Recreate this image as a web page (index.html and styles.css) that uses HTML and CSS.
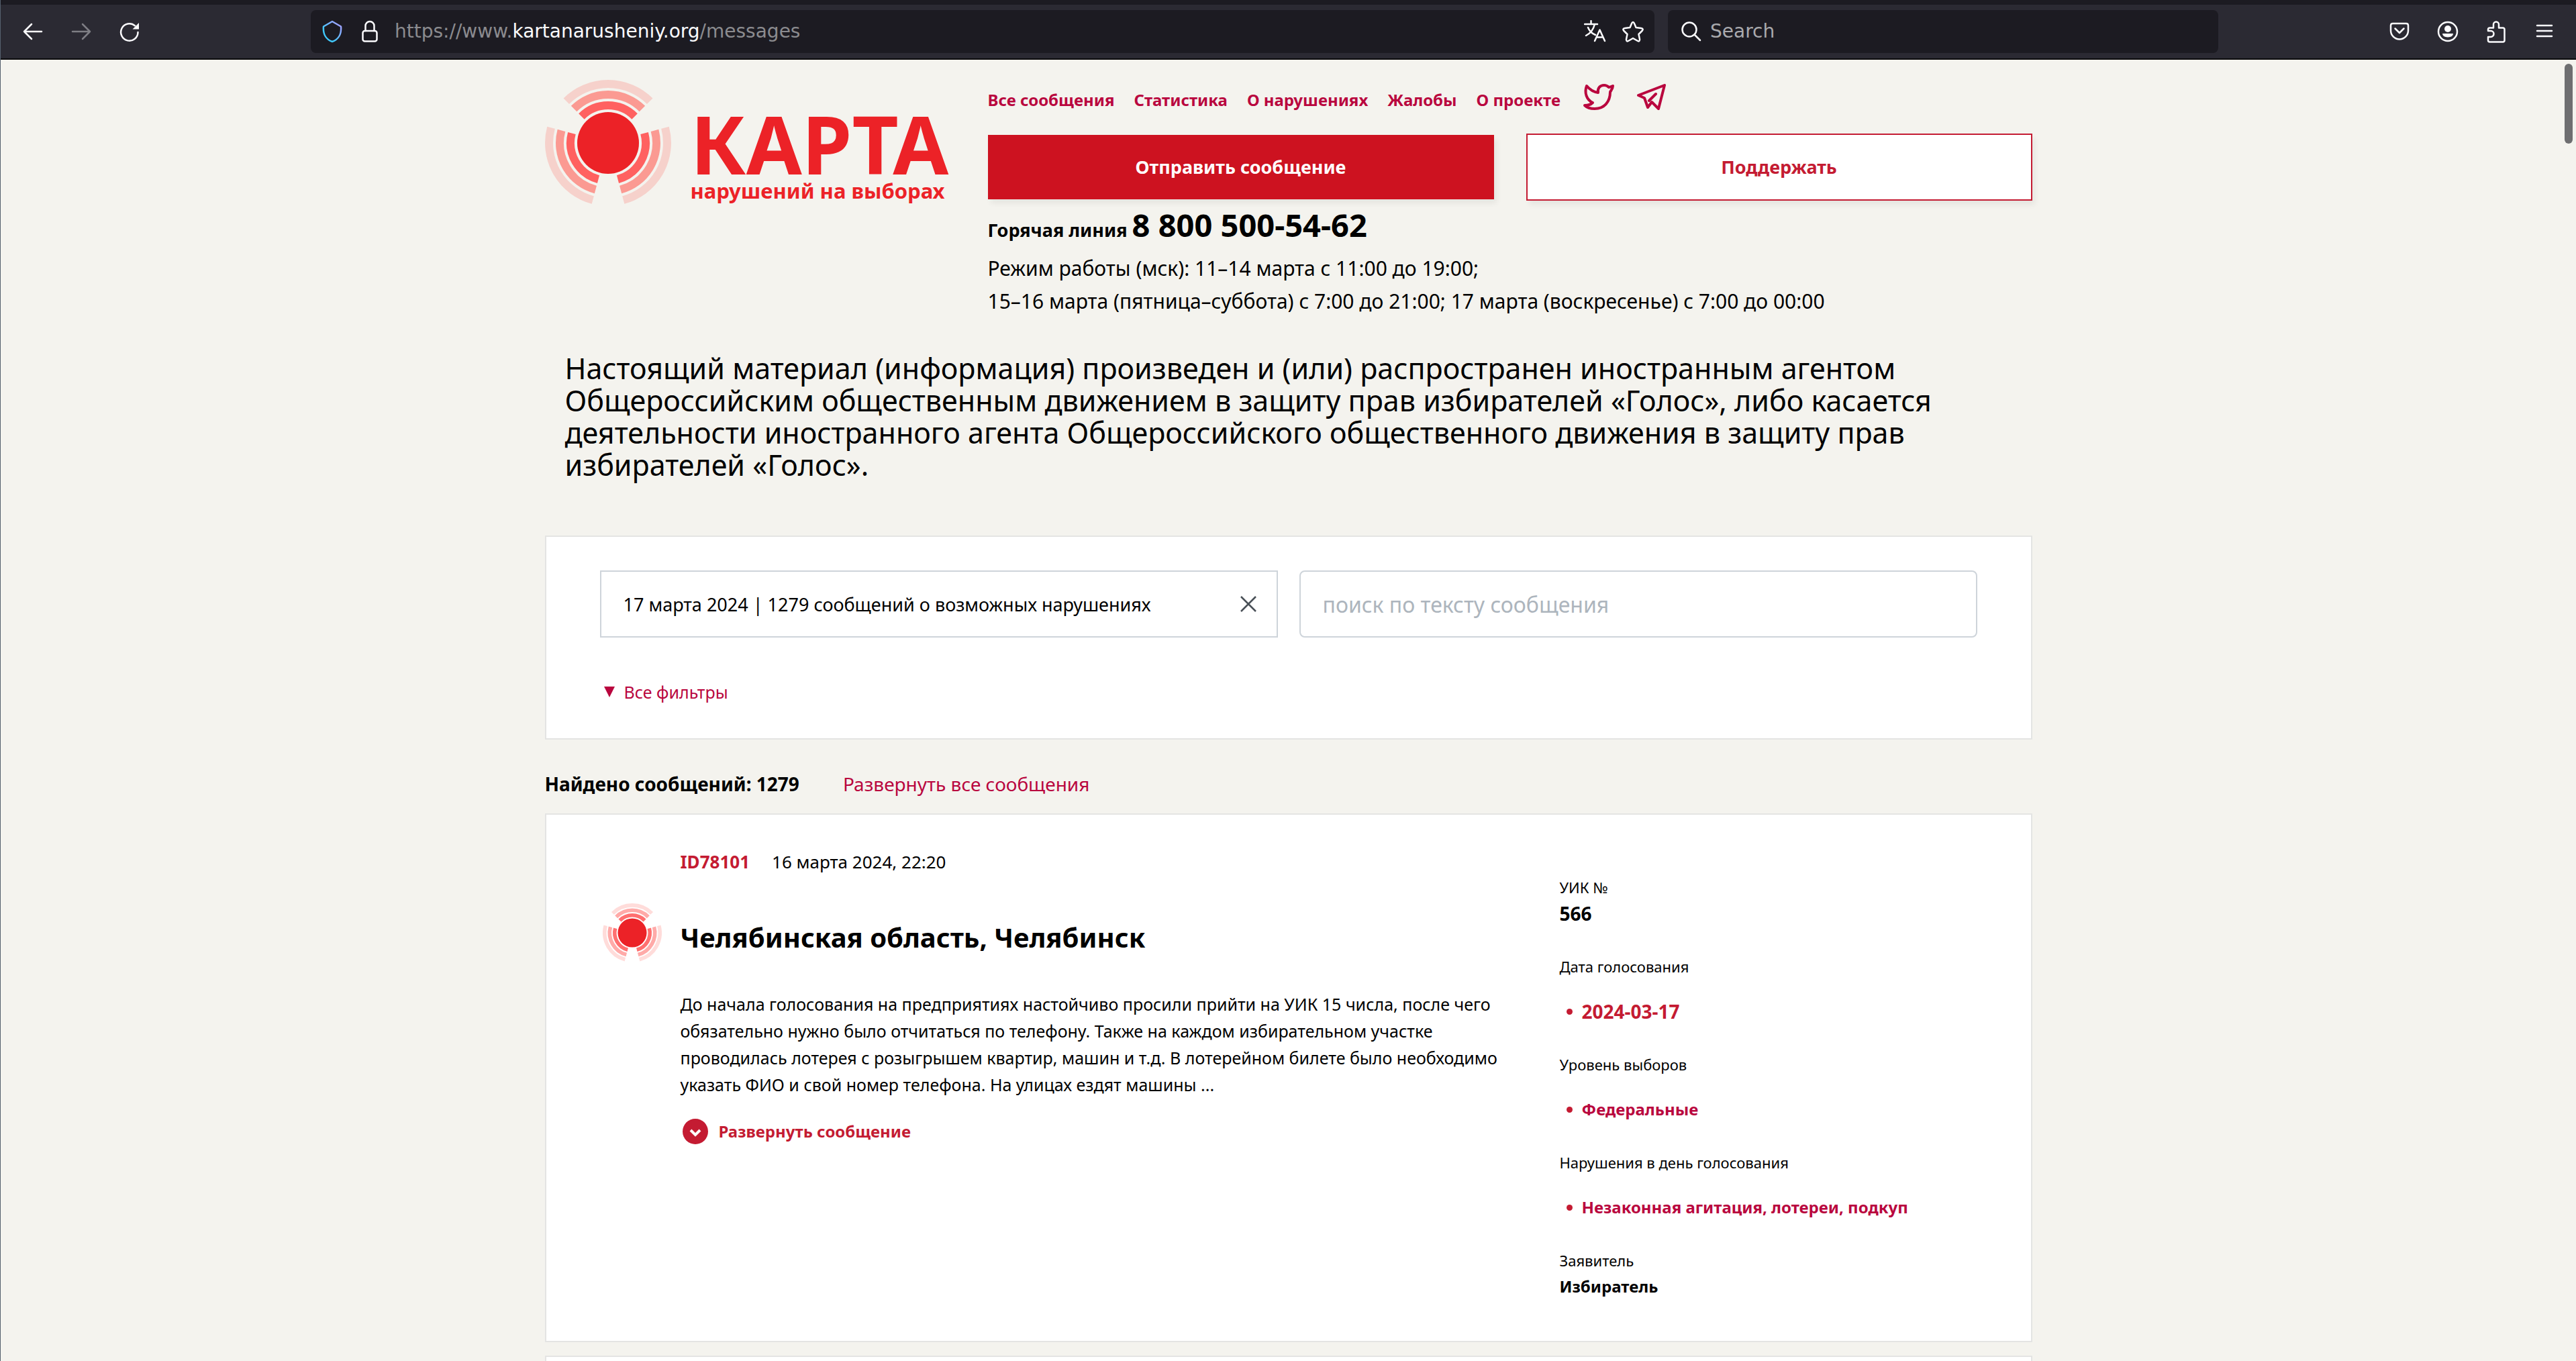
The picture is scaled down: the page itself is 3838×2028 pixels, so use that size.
FILE: index.html
```html
<!DOCTYPE html>
<html lang="ru">
<head>
<meta charset="utf-8">
<title>Карта нарушений на выборах</title>
<link rel="stylesheet" href="styles.css">
</head>
<body>
<svg class="sprite" aria-hidden="true">
  <symbol id="emblem" viewBox="-94 -94 188 188">
    <circle class="emblem-core" r="46"/>
    <g id="rings">
      <path class="ring ring-1" d="M-39.6-39.6A56 56 0 0 1 39.6-39.6"/>
      <path class="ring ring-2" d="M-50.9-50.9A72 72 0 0 1 50.9-50.9"/>
      <path class="ring ring-3" d="M-62.2-62.2A88 88 0 0 1 62.2-62.2"/>
    </g>
    <use href="#rings" transform="rotate(120)"/>
    <use href="#rings" transform="rotate(240)"/>
  </symbol>
</svg>
<div class="window">
  <div class="tab-strip"></div>
  <div class="toolbar">
    <div class="tool-group">
      <button class="tool" aria-label="Back"><svg width="32" height="32" viewBox="0 0 32 32"><path d="M29 16H3M14 5L3 16L14 27"/></svg></button>
      <button class="tool tool-dim" aria-label="Forward"><svg width="32" height="32" viewBox="0 0 32 32"><path d="M3 16H29M18 5L29 16L18 27"/></svg></button>
      <button class="tool" aria-label="Reload"><svg width="32" height="32" viewBox="0 0 32 32"><path d="M28.500 17A12.700 12.700 0 1 1 24 7.300"/><path class="solid" d="M30 3V12.500H20.500Z"/></svg></button>
    </div>
    <div class="fields">
      <div class="url-bar">
        <svg width="32" height="34" viewBox="0 0 32 34"><defs><linearGradient id="shield" x1="0" y1="1" x2="1" y2="0"><stop offset=".3" stop-color="#3fc8fb"/><stop offset=".85" stop-color="#9ba4ff"/></linearGradient></defs><path class="shield" d="M16 2L29 9.500C30 21 25 29 16 32C7 29 2 21 3 9.500Z"/></svg>
        <svg class="lock" width="24" height="34" viewBox="0 0 24 34"><rect x="1.500" y="16" width="21" height="15.500" rx="3"/><path d="M5.500 16V8.500A6.500 6.500 0 0 1 18.500 8.500V16"/></svg>
        <div class="url">https://www.<span class="url-host">kartanarusheniy.org</span>/messages</div>
        <button class="bar-icon" aria-label="Translate"><svg width="34" height="34" viewBox="0 0 34 34"><path d="M1 6H20M10.500 1V6M16 6C14 14 9 20 3 23M6 11C8 16 12 20 17 22"/><path d="M16 31L23.500 14.500L31 31M19 25.500H28"/></svg></button>
        <button class="bar-icon" aria-label="Bookmark"><svg width="34" height="34" viewBox="0 0 34 34"><path d="M17 3C18 3 18.500 3.700 19 5L21.500 11L29 12C32 12.500 32.500 14 30.500 16L25.500 21L27 28.500C27.300 31 26 32 24 31L17 27L10 31C8 32 6.700 31 7 28.500L8.500 21L3.500 16C1.500 14 2 12.500 5 12L12.500 11L15 5C15.500 3.700 16 3 17 3Z"/></svg></button>
      </div>
      <label class="search-bar">
        <svg width="30" height="30" viewBox="0 0 30 30"><circle cx="12" cy="12" r="10.500"/><path d="M20 20L28 28"/></svg>
        <input class="search-input" type="search" placeholder="Search" aria-label="Search">
      </label>
    </div>
    <div class="tool-group">
      <button class="tool" aria-label="Pocket"><svg width="32" height="32" viewBox="0 0 32 32"><path d="M6 4H26Q29 4 29 7V14.500A13 13 0 0 1 3 14.500V7Q3 4 6 4ZM9.500 11.500L16 18L22.500 11.500"/></svg></button>
      <button class="tool" aria-label="Account"><svg width="32" height="32" viewBox="0 0 32 32"><circle cx="16" cy="16" r="14"/><circle class="solid" cx="16" cy="12" r="5"/><path class="solid" d="M8 19H24Q24 24 16 24.500Q8 24 8 19Z"/></svg></button>
      <button class="tool" aria-label="Extensions"><svg width="32" height="34" viewBox="0 0 32 34"><path d="M4 16V14Q4 11.500 6.500 11.500H12V6.500A4 4 0 0 1 20 6.500V11.500H26Q28.500 11.500 28.500 14V30Q28.500 32.500 26 32.500H6.500Q4 32.500 4 30V25H8A4.500 4.500 0 0 0 8 16H4Z"/></svg></button>
      <button class="tool" aria-label="Menu"><svg width="32" height="32" viewBox="0 0 32 32"><path d="M5 7H27M5 15H27M5 23H27"/></svg></button>
    </div>
  </div>

  <div class="viewport">
    <div class="scroll-thumb"></div>
    <div class="page">
      <header class="header">
        <a class="logo" href="#">
          <svg class="emblem" width="188" height="188"><use href="#emblem"/></svg>
          <span class="logo-text"><span class="logo-name">КАРТА</span><span class="logo-sub">нарушений на выборах</span></span>
        </a>
        <div class="header-main">
          <nav class="nav">
            <a href="#">Все сообщения</a>
            <a href="#">Статистика</a>
            <a href="#">О нарушениях</a>
            <a href="#">Жалобы</a>
            <a href="#">О проекте</a>
            <a class="social" href="#" aria-label="Twitter"><svg width="48" height="40" viewBox="0 0 48 40"><path d="M6 3C11 9 16 12 23 13C22 6 26 2 32 2C35 2 37 3 39 5C41 5 43 4 45 3C45 7 43 9 41 12C41 27 32 37 18 37C12 37 7 36 3 32C8 32 12 31 15 28C6 24 2 13 6 3Z"/></svg></a>
            <a class="social" href="#" aria-label="Telegram"><svg width="44" height="40" viewBox="0 0 44 40"><path d="M41 2L2 17L11 21L16 35L22 27L32 37ZM28 15L18 25"/></svg></a>
          </nav>
          <div class="actions">
            <button class="btn btn-primary">Отправить сообщение</button>
            <button class="btn btn-outline">Поддержать</button>
          </div>
          <p class="hotline">Горячая линия <span class="phone">8 800 500-54-62</span></p>
          <p class="hours">Режим работы (мск): 11–14 марта с 11:00 до 19:00;<br>15–16 марта (пятница–суббота) с 7:00 до 21:00; 17 марта (воскресенье) с 7:00 до 00:00</p>
        </div>
      </header>

      <p class="disclaimer">Настоящий материал (информация) произведен и (или) распространен иностранным агентом Общероссийским общественным движением в защиту прав избирателей «Голос», либо касается деятельности иностранного агента Общероссийского общественного движения в защиту прав избирателей «Голос».</p>

      <form class="card filters">
        <div class="filter-row">
          <div class="field field-square">
            <input class="field-input" type="text" value="17 марта 2024 | 1279 сообщений о возможных нарушениях" aria-label="Кампания">
            <button class="clear" type="button" aria-label="Очистить"><svg width="26" height="26" viewBox="0 0 26 26"><path d="M2 2L24 24M24 2L2 24"/></svg></button>
          </div>
          <div class="field">
            <input class="field-input field-large" type="text" placeholder="поиск по тексту сообщения" aria-label="Поиск по тексту сообщения">
          </div>
        </div>
        <button class="all-filters" type="button"><svg width="16" height="16" viewBox="0 0 16 16"><path d="M0 0H16L8 16Z"/></svg>Все фильтры</button>
      </form>

      <div class="summary">
        <strong>Найдено сообщений: 1279</strong>
        <a href="#">Развернуть все сообщения</a>
      </div>

      <article class="card message">
        <div class="message-main">
          <div class="message-meta"><a class="message-id" href="#">ID78101</a><time>16 марта 2024, 22:20</time></div>
          <svg class="emblem emblem-light" width="88" height="88"><use href="#emblem"/></svg>
          <h2 class="message-title">Челябинская область, Челябинск</h2>
          <p class="message-text">До начала голосования на предприятиях настойчиво просили прийти на УИК 15 числа, после чего обязательно нужно было отчитаться по телефону. Также на каждом избирательном участке проводилась лотерея с розыгрышем квартир, машин и т.д. В лотерейном билете было необходимо указать ФИО и свой номер телефона. На улицах ездят машины ...</p>
          <button class="expand"><svg width="38" height="38" viewBox="0 0 38 38"><circle cx="19" cy="19" r="19"/><path d="M12 17L19 24L26 17"/></svg>Развернуть сообщение</button>
        </div>
        <dl class="facts">
          <div><dt>УИК №</dt><dd class="numeric">566</dd></div>
          <div><dt>Дата голосования</dt><dd class="numeric"><ul><li>2024-03-17</li></ul></dd></div>
          <div><dt>Уровень выборов</dt><dd><ul><li><a href="#">Федеральные</a></li></ul></dd></div>
          <div><dt>Нарушения в день голосования</dt><dd><ul><li><a href="#">Незаконная агитация, лотереи, подкуп</a></li></ul></dd></div>
          <div><dt>Заявитель</dt><dd>Избиратель</dd></div>
        </dl>
      </article>
      <article class="card message"></article>
    </div>
  </div>
</div>
</body>
</html>
```
FILE: styles.css
```css
:root {
  --link: #b9063e;
  --red: #c41b32;
  --small: 22px;
  --strong: 24px;
  --text: 25px;
  --medium: 27px;
  --lead: 28px;
  --large: 43px;
}

* { box-sizing: border-box; }

body {
  margin: 0;
  font-family: "Noto Sans", "Open Sans", sans-serif;
  font-size: var(--text);
  line-height: 40px;
  color: #000;
}

p, h2, dl, dd, ul { margin: 0; padding: 0; }
a { color: var(--link); text-decoration: none; }
svg { display: block; flex: none; }
button, input { font: inherit; color: inherit; margin: 0; padding: 0; border: 0; background: none; }
button { cursor: pointer; }
.sprite { position: absolute; width: 0; height: 0; }

.window {
  display: flex;
  flex-direction: column;
  height: 100vh;
  overflow: hidden;
  border-left: 1px solid #55606e;
  background: #f4f3ee;
}

/* Browser chrome */
.tab-strip { flex: none; height: 7px; background: #1c1b22; }
.toolbar {
  flex: none;
  display: flex;
  align-items: center;
  gap: 234px;
  height: 82px;
  padding: 0 11px 0 12px;
  background: #2b2a33;
  border-bottom: 2px solid #0c0c0d;
  font-family: "DejaVu Sans", sans-serif;
  font-size: 28px;
}
.toolbar svg { fill: none; stroke: #fbfbfe; stroke-width: 2.5; stroke-linecap: round; stroke-linejoin: round; }
.toolbar svg .solid { fill: #fbfbfe; stroke-width: 0; }
.toolbar svg .shield { stroke: url(#shield); }
.tool-group { display: flex; }
.tool { display: flex; align-items: center; justify-content: center; width: 72px; height: 64px; }
.tool-dim { opacity: .4; }
.fields { flex: 1; display: grid; grid-template-columns: 2002fr 820fr; gap: 20px; }
.url-bar, .search-bar {
  display: flex;
  align-items: center;
  height: 64px;
  border-radius: 8px;
  background: #1c1b22;
}
.url-bar { padding: 0 15px 0 16px; }
.search-bar { padding: 0 20px; gap: 13px; }
.lock { margin-left: 28px; }
.url { flex: 1; margin-left: 25px; color: #8b8b8f; }
.url-host { color: #fbfbfe; }
.bar-icon { margin-left: 22px; }
.search-input { flex: 1; min-width: 0; outline: 0; }
.search-input::placeholder { color: #a9a9ad; opacity: 1; }

/* Page */
.viewport { flex: 1; min-height: 0; position: relative; overflow: hidden; }
.scroll-thumb {
  position: absolute;
  top: 6px;
  right: 5px;
  width: 12px;
  height: 119px;
  border-radius: 6px;
  background: #6e6e70;
}
.page { max-width: 2216px; margin: 0 auto; }

.header { display: grid; grid-template-columns: 660px 1fr; }
.logo { display: flex; gap: 29px; padding-top: 30px; color: #ec2227; font-weight: 700; }
.logo-text { display: flex; flex-direction: column; }
.logo-name { padding-top: 45px; font-size: 120px; line-height: 100px; }
.logo-sub { font-size: 31px; line-height: 40px; }
.emblem { --ring-1: #ff6160; --ring-2: #fb9a92; --ring-3: #f6d1cb; }
.emblem-light { --ring-1: #ff7070; --ring-2: #ffaaa8; --ring-3: #ffdcda; }
.emblem-core { fill: #ec2227; }
.ring { fill: none; stroke-width: 12; }
.ring-1 { stroke: var(--ring-1); }
.ring-2 { stroke: var(--ring-2); }
.ring-3 { stroke: var(--ring-3); }

.header-main { padding-top: 36px; }
.nav { display: flex; gap: 29px; font-size: var(--strong); font-weight: 700; line-height: 48px; }
.social { padding-left: 4px; }
.social svg { fill: none; stroke: var(--link); stroke-width: 4; stroke-linejoin: round; stroke-linecap: round; }
.actions { display: grid; grid-template-columns: 1fr 1fr; align-items: center; gap: 48px; margin-top: 26px; }
.btn { height: 96px; font-size: var(--medium); font-weight: 700; box-shadow: 4px 6px 8px rgba(0, 0, 0, .06); }
.btn-primary { background: #cd1220; color: #fff; }
.btn-outline { height: 100px; border: 2px solid var(--red); background: #fff; color: var(--red); }
.hotline { margin-top: 12px; font-size: var(--medium); font-weight: 700; line-height: 64px; }
.phone { font-size: 47px; line-height: 48px; }
.hours { font-size: 30px; line-height: 49px; }

.disclaimer { margin-top: 52px; padding: 0 30px; font-size: var(--large); line-height: 48px; }

.card { border: 2px solid #e4e4e3; background: #fff; }
.filters { margin-top: 81px; padding: 50px 80px 49px; }
.filter-row { display: grid; grid-template-columns: 1fr 1fr; gap: 32px; }
.field {
  display: flex;
  align-items: center;
  height: 100px;
  padding: 0 29px 0 33px;
  border: 2px solid #ced4da;
  border-radius: 8px;
}
.field-square { border-radius: 0; }
.field-input { flex: 1; min-width: 0; height: 90px; outline: 0; font-size: var(--medium); }
.field-large { font-size: 32px; }
.field-input::placeholder { color: #adb5bd; opacity: 1; }
.clear svg { fill: none; stroke: #495057; stroke-width: 2.5; }
.all-filters { display: flex; align-items: center; gap: 14px; margin-top: 61px; padding-left: 6px; color: var(--link); }
.all-filters svg { fill: var(--link); }

.summary { display: flex; gap: 65px; margin: 42px 0 20px; font-size: var(--lead); line-height: 48px; }

.message {
  display: grid;
  grid-template-columns: 1fr 622px;
  min-height: 160px;
  margin-bottom: 20px;
  padding: 50px 80px 61px 84px;
}
.message-main { display: grid; grid-template-columns: 88px 1fr; column-gap: 28px; align-content: start; padding-right: 76px; }
.message-main > * { grid-column: 2; }
.message-meta { display: flex; gap: 33px; margin-bottom: 42px; font-size: 26px; }
.message-id { color: var(--red); font-weight: 700; }
.message-main > .emblem-light { grid-column: 1; grid-row: 2; }
.message-title { grid-row: 2; align-self: center; padding-top: 14px; font-size: 40px; line-height: 60px; }
.message-text { margin-top: 42px; }
.expand {
  display: flex;
  align-items: center;
  gap: 16px;
  margin-top: 30px;
  padding-left: 3px;
  color: var(--red);
  font-size: var(--strong);
  font-weight: 700;
}
.expand circle { fill: var(--red); }
.expand path { fill: none; stroke: #fff; stroke-width: 4; }

.facts { display: grid; gap: 40px; align-content: start; padding-top: 39px; font-size: var(--strong); font-weight: 700; }
.facts dt { font-size: var(--small); font-weight: 400; line-height: 38px; }
.facts .numeric { font-size: var(--lead); }
.facts ul { margin-top: 28px; list-style: none; color: var(--red); }
.facts li { display: flex; align-items: center; gap: 14px; }
.facts li::before { content: ""; width: 9px; height: 9px; margin-left: 10px; border-radius: 50%; background: var(--red); }
```
